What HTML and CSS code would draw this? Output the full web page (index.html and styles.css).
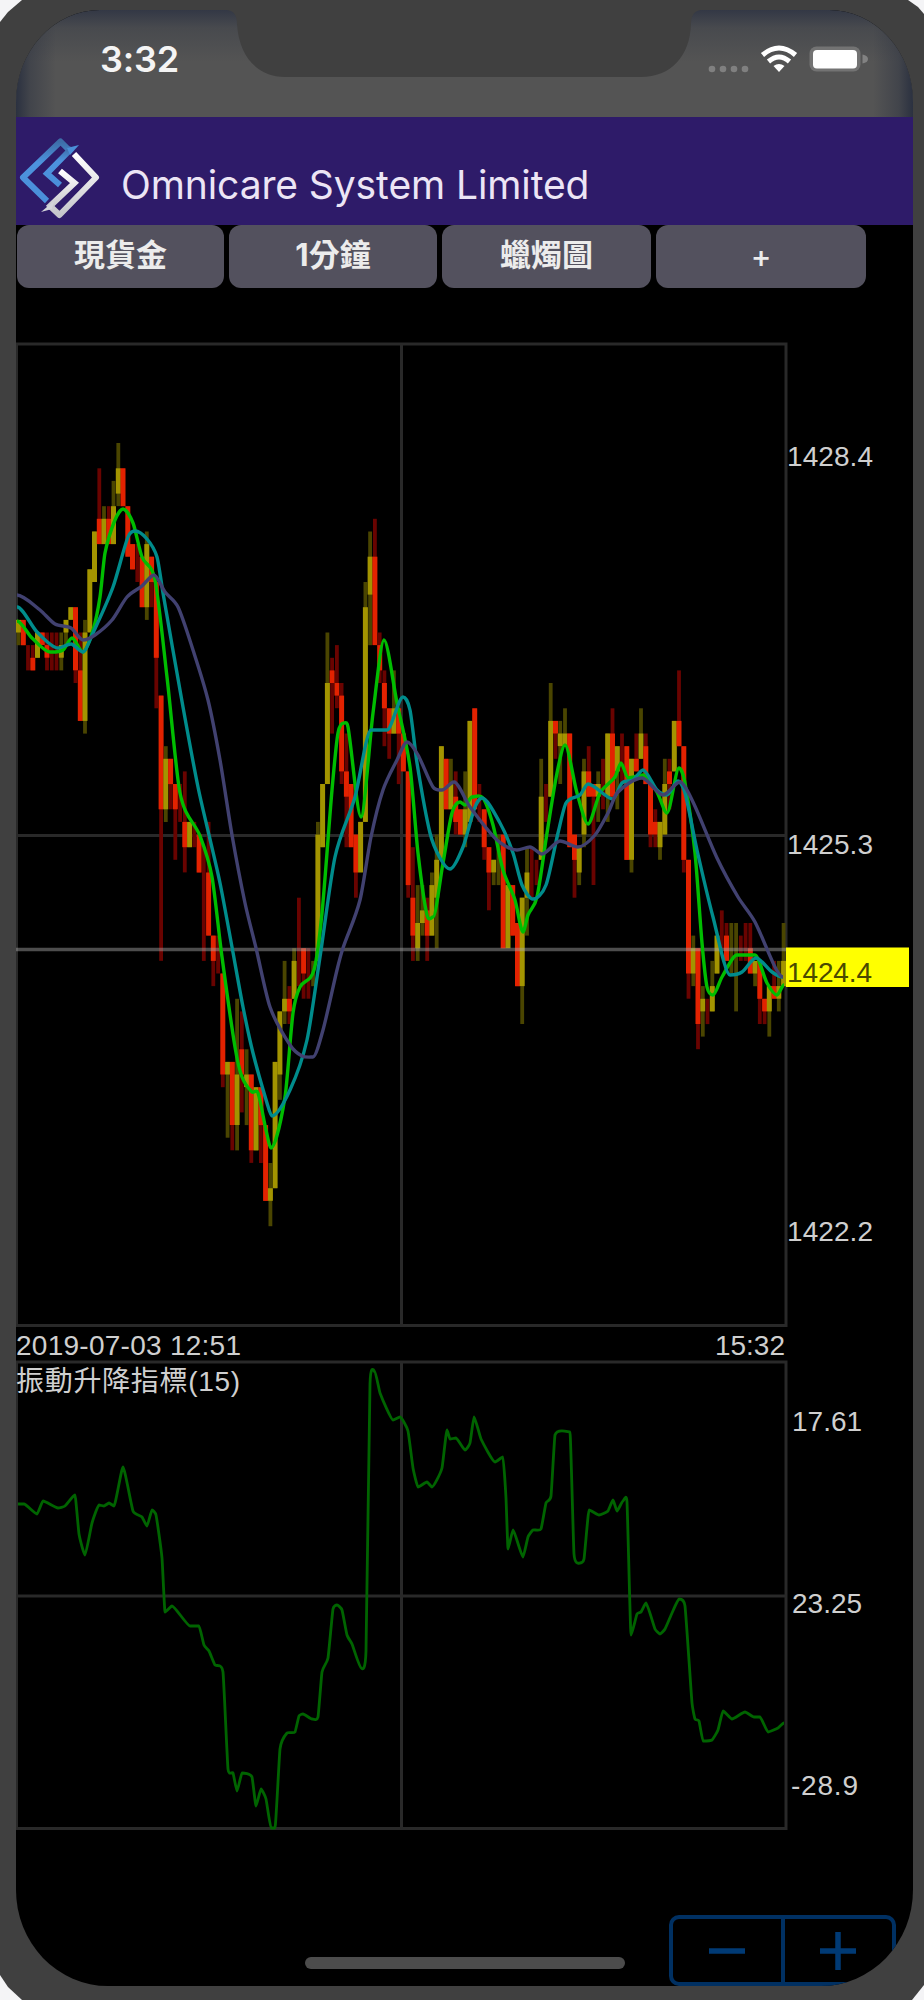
FILE: index.html
```html
<!DOCTYPE html>
<html lang="zh-Hant">
<head>
<meta charset="utf-8">
<title>Omnicare System Limited</title>
<link rel="stylesheet" href="styles.css">
</head>
<body>
<div class="phone">
  <div class="screen">
    <div class="status">
      <span class="clock">3:32</span>
      <svg class="status-icons" width="164" height="32" viewBox="0 0 164 32">
        <g fill="#808080"><circle cx="6" cy="26" r="3.3"/><circle cx="17" cy="26" r="3.3"/><circle cx="28" cy="26" r="3.3"/><circle cx="39" cy="26" r="3.3"/></g>
        <g fill="none" stroke="#fff" stroke-width="5"><path d="M56.500 12Q73 -2 89.500 12"/><path d="M62.500 18.500Q73 9.500 83.500 18.500"/></g>
        <path d="M67.500 23Q73 19 78.500 23L73 29Z" fill="#fff"/>
        <rect x="103.500" y="3.500" width="51" height="25" rx="7" fill="#737373"/>
        <rect x="107" y="7" width="44" height="18.500" rx="4" fill="#fff"/>
        <path d="M156.500 11.500Q162 12.500 162 16T156.500 20.500Z" fill="#828282"/>
      </svg>
    </div>
    <svg class="notch" width="474" height="67" viewBox="0 0 474 67"><path d="M0 0Q10 1 10 14C12 46 30 67 58 67H414C444 67 463 46 464 14Q464 1 474 0Z" fill="#404040"/></svg>
    <header class="header">
      <svg class="logo" width="84" height="86" viewBox="0 0 84 86">
        <defs>
          <linearGradient id="blue" x1="0" y1="0" x2="0" y2="1"><stop offset="0" stop-color="#3d6da8"/><stop offset=".35" stop-color="#4d93dd"/><stop offset="1" stop-color="#4a8fda"/></linearGradient>
          <linearGradient id="silver" x1="0" y1="0" x2="0" y2="1"><stop offset="0" stop-color="#fff"/><stop offset="1" stop-color="#c6c6cb"/></linearGradient>
        </defs>
        <g fill="none" stroke="url(#blue)" stroke-width="6"><path d="M54 17L43.500 6.500L6 42.500L30 66" stroke-linejoin="round"/><path d="M55 13L30 38.500L43 50"/></g>
        <path d="M50 13L62 10L53 20Z" fill="#4b8fd8"/>
        <g fill="none" stroke="url(#silver)" stroke-width="6"><path d="M57 19L79 42.500L42.500 80L33 71" stroke-linejoin="round"/><path d="M43 36L57.500 48L31 73"/></g>
        <path d="M37 66L24 77L35 74Z" fill="#d4d4da"/>
      </svg>
      <h1 class="title">Omnicare System Limited</h1>
    </header>
    <nav class="tabs">
      <button class="tab">現貨金</button>
      <button class="tab">1分鐘</button>
      <button class="tab">蠟燭圖</button>
      <button class="tab tab-add">+</button>
    </nav>
    <main class="charts">
      <svg class="chart" width="896" height="1550" viewBox="16 286 896 1550">
        <g class="grid">
          <path d="M16.500 344H786V1325.500H16.500Z"/>
          <path d="M401.500 344V1325.500M16 835.500H786"/>
          <path d="M16.500 1362H786V1828.500H16.500Z"/>
          <path d="M401.500 1362V1828.500M16 1596H786"/>
        </g>
        <g id="candles"></g>
        <path class="level" d="M16 949.500H786"/>
        <path id="ma-fast" class="line fast"/>
        <path id="ma-mid" class="line mid"/>
        <path id="ma-slow" class="line slow"/>
        <path id="indicator" class="line ind"/>
        <rect x="786" y="947.500" width="123" height="39.500" fill="#ffff00"/>
        <g class="labels">
          <text x="787" y="466" textLength="86">1428.4</text>
          <text x="787" y="853.500" textLength="86">1425.3</text>
          <text x="787" y="981.500" textLength="85" class="price">1424.4</text>
          <text x="787" y="1240.500" textLength="86">1422.2</text>
          <text x="16" y="1355" textLength="225">2019-07-03 12:51</text>
          <text x="785" y="1355" text-anchor="end">15:32</text>
          <text x="16" y="1390.500" textLength="224">振動升降指標(15)</text>
          <text x="792" y="1431">17.61</text>
          <text x="792" y="1613">23.25</text>
          <text x="791" y="1795" textLength="67">-28.9</text>
        </g>
      </svg>
    </main>
    <footer class="footer">
      <div class="home"></div>
      <div class="stepper">
        <button class="step"><svg width="36" height="38"><path d="M0 19H36"/></svg></button>
        <button class="step"><svg width="36" height="38"><path d="M0 19H36M18 0V38"/></svg></button>
      </div>
    </footer>
  </div>
</div>
<script src="chart.js"></script>
</body>
</html>
```

FILE: styles.css
```css
* { box-sizing: border-box; }
body { margin: 0; background: #f4f4f6; font-family: Inter, "Noto Sans CJK TC", sans-serif; }
.phone {
  width: 924px; height: 2000px; padding: 10px 11px 14px 16px; background: #404040;
  clip-path: polygon(0 22px, 8px 12px, 22px 0, 908px 0, 918px 7px, 924px 14px, 924px 1985px, 912px 2000px, 22px 2000px, 8px 1987px, 0 1975px);
}
.screen {
  position: relative; display: flex; flex-direction: column; width: 897px; height: 1976px; overflow: hidden;
  background: #000; border-radius: 84px 84px 92px 92px / 92px 92px 96px 96px;
}
.status {
  display: flex; flex: none; justify-content: space-between; height: 107px; padding: 33px 43px 0 84px;
  background: linear-gradient(to right, #2b3140 0, rgba(43, 49, 64, .45) 14px, transparent 40px, transparent 857px, rgba(43, 49, 64, .45) 883px, #2b3140 100%),
    linear-gradient(#333845, #484a4e 18px, #545454 52px);
}
.clock { color: #f4f4f4; font-size: 36px; font-weight: 600; line-height: 33px; letter-spacing: -0.2px; }
.status-icons { display: block; }
.notch { position: absolute; left: 211px; top: 0; }
.header { display: flex; flex: none; height: 108px; padding: 18px 0 0 1px; background: #2e1b69; }
.logo { flex: none; }
.title { margin: 24px 0 0 20px; color: #ece5f5; font-size: 39px; font-weight: 400; line-height: 52px; letter-spacing: -0.1px; white-space: nowrap; }
.tabs { display: grid; flex: none; grid-template-columns: 207px 208px 209px 210px; column-gap: 5px; height: 61px; padding: 0 0 1px 1px; }
.tab { padding: 0 0 4px; border: 0; border-radius: 12px; background: #53515e; color: #ececec; font: 700 31px/56px Inter, "Noto Sans CJK TC", sans-serif; }
.tab-add { padding-top: 3px; font-weight: 500; }
.charts { flex: none; height: 1550px; }
.chart { display: block; }
.grid path { fill: none; stroke: #292929; stroke-width: 3; }
.level { stroke: #aaa; stroke-opacity: .45; stroke-width: 3.5; }
.body-up { fill: #a39400; }
.body-down { fill: #e32200; }
.wick-up { fill: #4a4500; }
.wick-down { fill: #690300; }
.line { fill: none; stroke-width: 3.4; stroke-linejoin: round; }
.fast { stroke: #00bd00; }
.mid { stroke: #008c8c; }
.slow { stroke: #414170; }
.ind { stroke: #006400; stroke-width: 2.8; }
.labels { fill: #cfcfcf; font-family: "Liberation Sans", "Noto Sans CJK TC", sans-serif; font-size: 28px; }
.price { fill: #4a4a00; }
.footer { display: flex; flex: none; justify-content: flex-end; height: 150px; padding: 79px 17px 0 0; }
.home { width: 320px; height: 12px; margin: 42px 44px 0 0; border-radius: 6px; background: #4c4c4c; }
.stepper { display: flex; width: 227px; height: 71px; border: 4px solid #003062; border-radius: 10px; }
.step { flex: 1; display: flex; align-items: center; justify-content: center; padding: 0; border: 0; background: none; }
.step + .step { border-left: 4px solid #003062; }
.step svg path { fill: none; stroke: #003a75; stroke-width: 5.5; }
```

FILE: chart.js
```js
// Candles: direction, wick top, body top, body bottom, wick bottom (in price ticks).
const candles = `U 12 12 13 14;D 12 12 14 14;D 14 14 14 16;D 14 15 16 16;U 13 13 15 15;D 13 13 14 14;D 13 14 15 16;D 13 15 15 16;D 13 15 15 16;U 13 14 15 16
U 12 12 13 14;U 11 11 12 12;D 11 11 16 17;D 13 16 20 20;U 12 13 20 21;U 8 8 13 13;U 5 5 9 9;D 0 4 6 6;U 3 4 6 6;D 3 4 6 6
U 1 3 6 6;U -2 0 2 3;D 0 0 3 3;D 3 3 7 7;D 6 6 8 8;D 6 8 8 9;D 7 7 11 11;U 5 6 11 12;D 7 7 9 11;D 9 9 15 19
D 18 18 27 39;U 22 23 27 28;D 23 23 25 27;D 25 25 27 31;D 25 27 27 28;D 24 28 30 32;U 28 28 30 30;D 28 29 29 30;D 29 29 32 32;D 30 32 32 39
D 28 32 37 37;D 37 37 39 41;D 37 39 39 40;D 40 40 48 49;U 47 47 48 53;D 47 47 52 54;U 42 48 52 54;D 43 46 48 51;U 46 48 49 52;D 48 48 54 55
U 49 49 54 54;D 49 49 52 55;D 52 52 58 58;U 55 57 58 60;U 47 47 57 57;U 43 43 48 50;U 39 42 43 44;D 41 42 43 44;U 38 39 42 42;D 34 40 40 41
D 38 38 40 42;D 38 40 40 42;U 39 40 40 41;U 28 29 39 39;U 25 25 30 30;U 13 17 25 25;D 15 16 17 21;D 14 17 18 19;D 17 18 24 25;D 21 24 26 30
D 25 25 30 30;D 29 29 32 34;U 28 28 32 32;U 9 11 28 28;U 5 7 10 14;D 4 7 14 14;D 13 14 16 17;D 16 17 19 22;D 19 19 21 23;U 16 19 21 21
D 19 19 21 25;D 21 21 24 24;D 24 24 33 34;D 30 34 37 39;U 33 36 38 39;U 33 35 36 37;D 34 35 37 39;U 32 33 37 37;U 29 31 34 38;U 22 22 31 31
D 23 23 27 27;U 23 25 27 27;D 24 26 28 29;D 27 27 29 29;U 24 27 29 30;U 20 20 28 28;D 19 19 27 27;D 25 27 27 28;D 27 27 30 31;D 30 30 32 35
U 31 31 32 33;U 29 30 30 33;D 29 29 38 38;U 33 33 38 38;D 33 33 37 37;D 36 36 41 41;U 34 34 41 44;U 30 32 34 37;D 30 32 32 34;D 31 32 32 33
U 23 26 31 31;D 25 28 28 28;U 17 20 26 26;D 20 20 21 23;U 20 21 22 25;U 19 21 22 22;D 21 21 30 30;D 29 29 31 34;U 30 30 32 33;U 23 24 29 30
D 22 24 26 26;D 25 25 26 33;U 24 25 26 28;D 23 25 25 27;U 21 21 26 28;D 19 21 26 26;U 22 22 24 27;D 21 24 24 25;D 22 22 31 31;U 23 23 31 32
D 21 23 24 24;U 19 21 23 23;D 21 22 25 25;D 25 25 29 30;D 27 28 29 30;U 28 28 30 31;U 23 25 29 29;D 23 24 25 27;U 20 20 24 24;D 16 20 22 22
D 22 22 31 32;D 31 31 40 42;U 37 38 40 41;D 38 38 44 46;U 41 42 43 45;D 42 43 43 44;U 39 41 43 43;U 37 37 40 40;D 35 37 37 38;D 36 37 39 39
U 36 38 38 40;U 36 38 38 43;D 37 38 38 39;D 36 38 38 39;D 36 38 40 40;U 39 39 40 41;D 39 39 42 44;D 42 42 43 44;U 41 41 43 45;D 39 41 42 42
U 39 41 42 43;U 36 39 41 41`.split(/[;\n]/);

const tickY = t => 468.3 + t * 12.63;
const NS = "http://www.w3.org/2000/svg";
const layer = document.getElementById("candles");

function bar(x, w, top, bottom, cls) {
  if (bottom <= top) return;
  const r = document.createElementNS(NS, "rect");
  r.setAttribute("x", x.toFixed(1));
  r.setAttribute("width", w);
  r.setAttribute("y", tickY(top).toFixed(1));
  r.setAttribute("height", (tickY(bottom) - tickY(top)).toFixed(1));
  r.setAttribute("class", cls);
  layer.appendChild(r);
}

candles.forEach((c, i) => {
  const [dir, ...v] = c.split(" ");
  const [wt, bt, bb, wb] = v.map(Number);
  const kind = dir === "U" ? "up" : "down";
  const x = 18.5 + i * 4.752;
  bar(x - 1.9, 3.8, wt, wb, "wick-" + kind);
  bar(x - 2.5, 5, bt, bb, "body-" + kind);
});

// Draws a lightly rounded curve through the points.
function curve(id, data, k) {
  const p = data.trim().split(/\s+/).map(s => s.split(",").map(Number));
  let d = "M" + p[0];
  for (let i = 0; i < p.length - 1; i++) {
    const a = p[i - 1] || p[i], b = p[i], c = p[i + 1], e = p[i + 2] || c;
    const w = c[0] - b[0];
    const s1 = (c[1] - a[1]) / (c[0] - a[0] || 1), s2 = (e[1] - b[1]) / (e[0] - b[0] || 1);
    const m1 = (b[1] - a[1]) * (c[1] - b[1]) <= 0 ? 0 : s1;
    const m2 = (c[1] - b[1]) * (e[1] - c[1]) <= 0 ? 0 : s2;
    d += `C${b[0] + w * k},${b[1] + m1 * w * k} ${c[0] - w * k},${c[1] - m2 * w * k} ${c}`;
  }
  document.getElementById(id).setAttribute("d", d);
}

curve("ma-slow", `17,595 40,610 55,624 71,628 83,640 95,635 112,620 127,597 142,586 154,575 165,592 178,607 193,650 208,700 220,760 232,835 245,903 256,948 270,1007 290,1045 302,1056 313,1057 323,1030 337,970 343,948 360,900 371,837 383,790 397,760 407,742 418,755 433,787 442,790 454,782 470,807 497,840 517,850 530,847 542,854 560,841 578,847 595,835 608,813 617,793 642,778 663,795 680,782 693,802 717,858 738,897 755,922 775,967 783,977`, .28);
curve("ma-mid", `17,607 37,632 58,648 71,644 83,652 93,633 113,587 128,537 135,531 147,539 157,557 163,593 183,707 198,787 209,835 220,883 232,947 243,1007 253,1053 267,1103 272,1116 290,1090 307,1040 320,957 335,857 355,797 371,730 387,730 403,697 410,710 417,763 430,833 440,858 450,869 463,847 475,807 482,798 500,823 513,853 522,885 533,899 546,885 558,833 566,803 580,795 588,784 613,799 622,783 633,780 643,770 657,790 667,795 678,781 685,793 697,850 713,917 730,975 742,972 756,958 772,972 783,977`, .28);
curve("ma-fast", `17,621 32,638 50,652 63,650 72,638 83,652 93,630 100,597 105,553 115,520 123,509 133,523 142,557 155,580 167,677 180,793 200,836 212,877 222,957 235,1047 242,1077 252,1092 258,1093 266,1130 271,1148 285,1097 293,1013 300,987 314,970 322,913 332,790 338,733 344,723 348,727 361,817 373,713 384,640 397,703 410,767 418,853 427,915 433,917 443,863 452,813 460,802 465,805 472,797 483,798 493,825 503,870 515,900 523,932 528,915 537,897 547,833 557,773 565,745 577,793 588,824 600,793 615,777 621,763 628,778 643,775 657,792 667,813 679,768 685,783 695,853 702,943 707,987 713,995 722,977 737,955 755,955 767,983 777,995 784,985`, .28);
curve("indicator", `18,1504 24,1504 37,1514 43,1501 58,1508 65,1506 75,1495 79,1534 85,1555 92,1523 99,1505 104,1506 109,1503 114,1506 123,1467 133,1511 142,1517 147,1526 152,1510 156,1515 162,1558 165,1612 172,1606 190,1626 199,1626 204,1645 209,1651 215,1665 223,1672 228,1769 233,1773 237,1791 242,1773 252,1777 256,1806 261,1789 266,1799 271,1828 275,1828 280,1749 287,1733 295,1732 299,1716 303,1714 312,1719 318,1717 322,1672 328,1658 333,1609 337,1605 342,1610 347,1635 352,1644 361,1668 366,1651 370,1384 375,1372 380,1393 393,1420 400,1417 408,1431 413,1468 418,1487 427,1482 432,1487 442,1468 447,1430 450,1439 456,1438 465,1450 470,1443 474,1417 481,1439 495,1462 503,1457 506,1498 508,1549 513,1530 523,1557 528,1537 533,1530 541,1529 546,1503 551,1496 555,1435 570,1432 574,1554 580,1563 584,1559 589,1510 599,1515 608,1511 613,1500 617,1511 623,1501 627,1502 631,1635 637,1614 641,1612 646,1603 655,1629 660,1634 665,1629 672,1613 679,1599 685,1606 692,1703 695,1719 699,1721 703,1741 712,1740 718,1730 723,1711 732,1719 745,1712 754,1717 760,1717 768,1732 778,1728 784,1723`, .15);
```
